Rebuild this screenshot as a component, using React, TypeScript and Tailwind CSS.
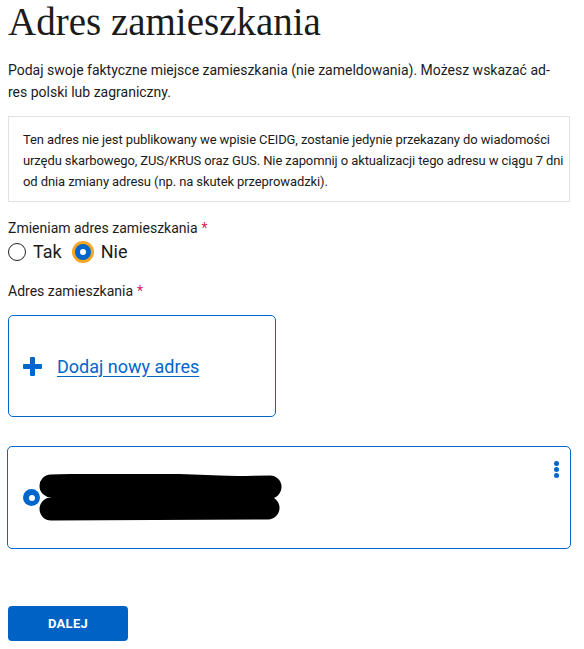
const blue = 'text-[#0066cc]'

function Required() {
  return <span className="ml-[4px] text-[#d31f4f]">*</span>
}

function PlusIcon() {
  return (
    <svg width="19" height="19" viewBox="0 0 19 19" className="shrink-0">
      <rect x="0" y="7" width="19" height="5" rx="1" fill="#0066cc" />
      <rect x="7" y="0" width="5" height="19" rx="1" fill="#0066cc" />
    </svg>
  )
}

function RadioOption({ label, checked }: { label: string; checked?: boolean }) {
  return (
    <label className="flex items-center gap-[7px]">
      {checked ? (
        <span className="flex h-[22px] w-[22px] items-center justify-center rounded-full bg-[#f5a623]">
          <span className="flex h-[16px] w-[16px] items-center justify-center rounded-full bg-[#0066cc]">
            <span className="h-[6px] w-[6px] rounded-full bg-white" />
          </span>
        </span>
      ) : (
        <span className="h-[18px] w-[18px] rounded-full border border-[#222]" />
      )}
      <span className="text-[18px] leading-[24px] text-[#1b1b1b]">{label}</span>
    </label>
  )
}

export default function App() {
  return (
    <div className="bg-white px-2 font-['Roboto',sans-serif] text-[#1b1b1b]">
      <h1 className="font-['Liberation_Serif',serif] text-[39px] leading-[44px] text-[#1b1b1b]">
        Adres zamieszkania
      </h1>

      <p className="mt-[15px] pr-[13px] text-[14px] leading-[22px]">
        Podaj swoje faktyczne miejsce zamieszkania (nie zameldowania). Możesz wskazać ad-
        <br />
        res polski lub zagraniczny.
      </p>

      {/* informacja o przekazaniu adresu */}
      <div className="mt-[13px] mr-[6px] whitespace-nowrap border border-[#e2e2e2] pl-[14px] pr-[4px] pt-[12px] pb-[9px] text-[13px] leading-[21px] tracking-[-0.1px]">
        Ten adres nie jest publikowany we wpisie CEIDG, zostanie jedynie przekazany do wiadomości
        <br />
        urzędu skarbowego, ZUS/KRUS oraz GUS. Nie zapomnij o aktualizacji tego adresu w ciągu 7 dni
        <br />
        od dnia zmiany adresu (np. na skutek przeprowadzki).
      </div>

      <div className="mt-[15px] text-[14px] leading-[22px]">
        Zmieniam adres zamieszkania
        <Required />
      </div>
      <div className="mt-[1px] flex items-center gap-[10px]">
        <RadioOption label="Tak" />
        <RadioOption label="Nie" checked />
      </div>

      <div className="mt-[16px] text-[14px] leading-[22px]">
        Adres zamieszkania
        <Required />
      </div>

      {/* nowy adres */}
      <button className="mt-[13px] flex h-[102px] w-[268px] items-center gap-[15px] rounded-[5px] border border-[#0066cc] bg-white pl-[14px] text-left">
        <PlusIcon />
        <span className={`${blue} text-[18px] underline underline-offset-[3px]`}>Dodaj nowy adres</span>
      </button>

      {/* zapisany adres */}
      <div className="relative mt-[29px] -ml-[1px] mr-[5px] flex h-[103px] items-center rounded-[5px] border border-[#0066cc] bg-white pl-[15px]">
        <span className="flex h-[17px] w-[17px] items-center justify-center rounded-full bg-[#0066cc]">
          <span className="h-[6px] w-[6px] rounded-full bg-white" />
        </span>
        <svg width="244" height="47" viewBox="0 0 244 47" className="-ml-[1px]">
          <g stroke="#000" strokeWidth="23" strokeLinecap="round" fill="none">
            <path d="M12 12 C80 10 140 11 180 13 C200 14 215 13 231 13" />
            <path d="M12 35 C70 35 140 35 229 34" />
          </g>
          <rect x="12" y="14" width="216" height="20" fill="#000" />
        </svg>
        <span className="absolute top-[14px] right-[11px] flex flex-col gap-[1px]">
          <span className="h-[5px] w-[5px] rounded-full bg-[#0066cc]" />
          <span className="h-[5px] w-[5px] rounded-full bg-[#0066cc]" />
          <span className="h-[5px] w-[5px] rounded-full bg-[#0066cc]" />
        </span>
      </div>

      <button className="mt-[57px] mb-[8px] h-[35px] w-[120px] rounded-[4px] bg-[#0062c4] text-[13px] font-bold tracking-[0.3px] text-white">
        DALEJ
      </button>
    </div>
  )
}
